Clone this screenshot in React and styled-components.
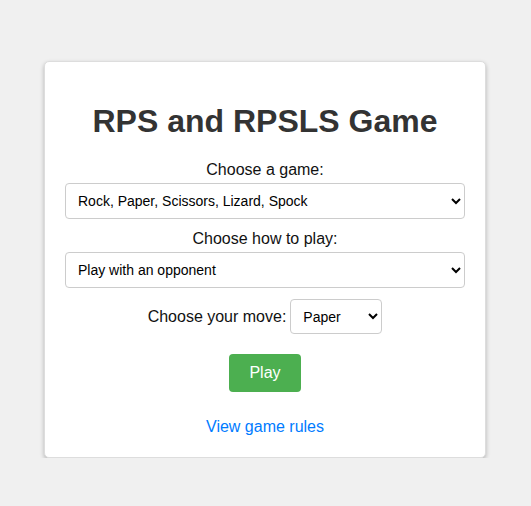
import React from "react";
import styled, { createGlobalStyle } from "styled-components";

const GlobalStyle = createGlobalStyle`
  body {
    margin: 0;
    padding-right: 1px;
    background: #f0f0f0;
    font-family: "Liberation Sans", Arial, sans-serif;
  }
`;

const Card = styled.div`
  width: 400px;
  margin: 61px auto 0;
  padding: 20px;
  background: #fff;
  border: 1px solid #ddd;
  border-radius: 5px;
  box-shadow: 0 2px 4px rgba(0, 0, 0, 0.25);
  text-align: center;
`;

const Title = styled.h1`
  font-size: 32px;
  font-weight: bold;
  color: #333;
  margin: 21px 0 21px;
  line-height: 37px;
`;

const Label = styled.label`
  display: ${(p) => (p.$inline ? "inline" : "block")};
  font-size: 16px;
  line-height: 18px;
  color: #111;
  margin-bottom: ${(p) => (p.$inline ? "0" : "4px")};
`;

const Select = styled.select`
  display: block;
  width: 100%;
  height: 36px;
  padding: 0 8px;
  margin-bottom: 11px;
  font-family: "Liberation Sans", Arial, sans-serif;
  font-size: 14px;
  color: #000;
  background: #fff;
  border: 1px solid #ccc;
  border-radius: 4px;
`;

const MoveRow = styled.div`
  display: flex;
  align-items: center;
  justify-content: center;
  gap: 4px;
  margin-bottom: 20px;
`;

const MoveSelect = styled(Select)`
  width: 92px;
  height: 35px;
  margin: 0;
`;

const PlayButton = styled.button`
  padding: 10px 20px;
  font-family: "Liberation Sans", Arial, sans-serif;
  font-size: 16px;
  line-height: 18px;
  color: #fff;
  background: #4caf50;
  border: none;
  border-radius: 4px;
  cursor: pointer;
`;

const RulesLink = styled.a`
  display: block;
  margin-top: 26px;
  margin-bottom: 1px;
  font-size: 16px;
  line-height: 18px;
  color: #007bff;
  text-decoration: none;
  cursor: pointer;
`;

export default function App() {
  return (
    <>
      <GlobalStyle />
      <Card>
        <Title>RPS and RPSLS Game</Title>
        <Label htmlFor="game">Choose a game:</Label>
        <Select id="game" defaultValue="rpsls">
          <option value="rps">Rock, Paper, Scissors</option>
          <option value="rpsls">Rock, Paper, Scissors, Lizard, Spock</option>
        </Select>
        <Label htmlFor="mode">Choose how to play:</Label>
        <Select id="mode" defaultValue="opponent">
          <option value="opponent">Play with an opponent</option>
          <option value="computer">Play against the computer</option>
        </Select>
        <MoveRow>
          <Label $inline htmlFor="move">
            Choose your move:
          </Label>
          <MoveSelect id="move" defaultValue="paper">
            <option value="rock">Rock</option>
            <option value="paper">Paper</option>
            <option value="scissors">Scissors</option>
            <option value="lizard">Lizard</option>
            <option value="spock">Spock</option>
          </MoveSelect>
        </MoveRow>
        <PlayButton>Play</PlayButton>
        <RulesLink>View game rules</RulesLink>
      </Card>
    </>
  );
}
